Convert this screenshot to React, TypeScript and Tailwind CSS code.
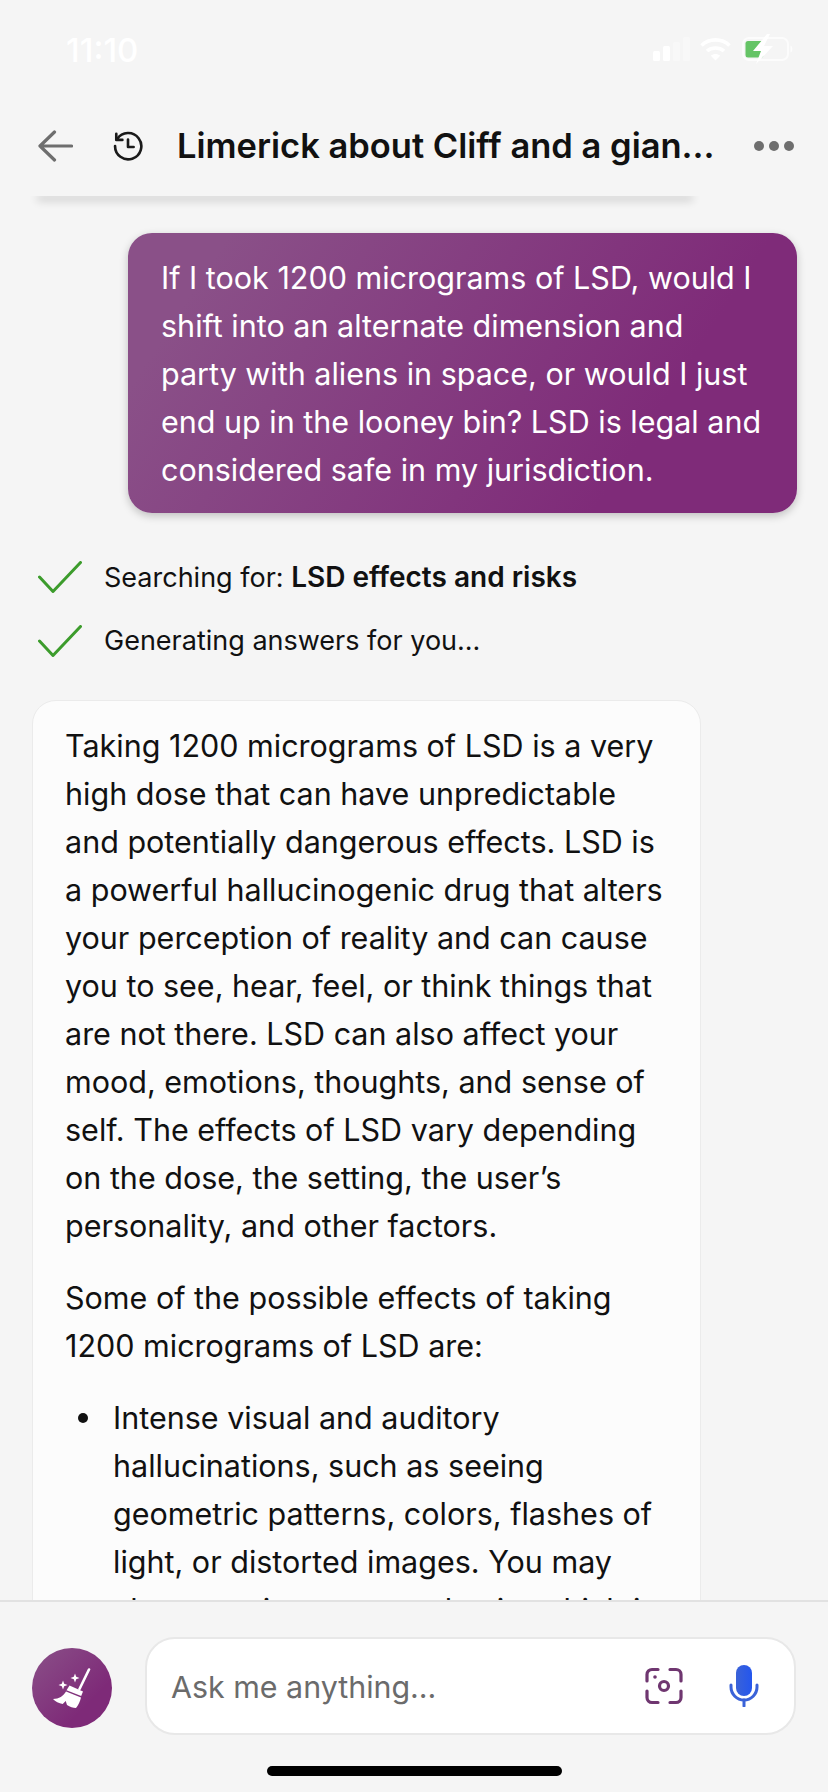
const F = '[font-family:Inter,"Liberation_Sans",sans-serif]';

function Signal() {
  return (
    <svg width="37" height="24" viewBox="0 0 37 24" fill="#ffffff">
      <rect x="0" y="14" width="7" height="10" rx="1.500" />
      <rect x="10" y="9" width="7" height="15" rx="1.500" />
      <rect x="20" y="5" width="7" height="19" rx="1.500" opacity="0.35" />
      <rect x="30" y="0" width="7" height="24" rx="1.500" opacity="0.35" />
    </svg>
  );
}

function Wifi() {
  return (
    <svg width="31" height="24" viewBox="0 0 31 24" fill="none" stroke="#ffffff" strokeWidth="3.600">
      <path d="M1.500 8.500C9 1 22 1 29.500 8.500" />
      <path d="M7 14C11.500 10 19.500 10 24 14" />
      <path d="M15.500 23.500l-4.700-4.700c2.800-2.300 6.600-2.300 9.400 0z" fill="#ffffff" stroke="none" />
    </svg>
  );
}

function Battery() {
  return (
    <svg width="52" height="30" viewBox="0 0 52 30" fill="none">
      <rect x="1" y="4" width="45" height="22" rx="6" stroke="#ffffff" strokeOpacity="0.7" strokeWidth="2" />
      <rect x="3.500" y="7" width="18" height="16.500" rx="2.500" fill="#65c466" />
      <path d="M48.500 11.500c2.500 1 2.500 6 0 7z" fill="#ffffff" fillOpacity="0.8" />
      <path d="M25 0L11 17h8l-5 13 17-18h-9l6-12z" fill="#ffffff" />
    </svg>
  );
}

function Broom() {
  return (
    <svg width="38" height="40" viewBox="0 0 38 40" fill="#ffffff">
      <path d="M36 1.500L26.500 21" stroke="#ffffff" strokeWidth="2.600" strokeLinecap="round" />
      <path d="M16.500 17.500L30 23.500l-1.800 4.500-14.700-5.700z" />
      <path d="M13 23.500l15 6c-1 4-2.600 7.500-5 10.500-3-.2-6-1.100-9-3l-1.300-4-3 3c-3.700-.5-7.500-2.500-9.700-5 6 0 10.500-3 13-7.500z" />
      <path d="M22 5.500l1.200 3.300 3.300 1.200-3.300 1.200L22 14.500l-1.200-3.300-3.300-1.200 3.300-1.200z" />
      <path d="M10 12.500l1.200 3.300 3.300 1.200-3.300 1.200L10 21.500l-1.200-3.300-3.300-1.200 3.300-1.200z" />
    </svg>
  );
}

function ScanCamera() {
  return (
    <svg width="38" height="38" viewBox="0 0 38 38" fill="none" stroke="#6f3670" strokeWidth="3.200" strokeLinecap="round" strokeLinejoin="round">
      <path d="M13 2.500H7a5 5 0 0 0-5 5V14" />
      <path d="M25 2.500h6a5 5 0 0 1 5 5V14" />
      <path d="M2 24v6.500a5 5 0 0 0 5 5h6" />
      <path d="M36 24v6.500a5 5 0 0 1-5 5h-6" />
      <circle cx="19" cy="19" r="4.500" />
      <circle cx="10" cy="10" r="1.800" fill="#6f3670" stroke="none" />
    </svg>
  );
}

function Mic() {
  return (
    <svg width="30" height="42" viewBox="0 0 30 42" fill="none">
      <defs>
        <linearGradient id="micg" x1="0" y1="0" x2="1" y2="0">
          <stop offset="0" stopColor="#3a62d8" />
          <stop offset="1" stopColor="#2456ee" />
        </linearGradient>
      </defs>
      <rect x="7" y="0" width="16" height="31" rx="8" fill="url(#micg)" />
      <path d="M2 20v2a13 13 0 0 0 26 0v-2" stroke="#3a62d8" strokeWidth="3" strokeLinecap="round" />
      <path d="M15 35v6" stroke="#3a62d8" strokeWidth="3" strokeLinecap="round" />
    </svg>
  );
}

function Check() {
  return (
    <svg width="44" height="32" viewBox="0 0 44 32" fill="none" stroke="#3c9c2c" strokeWidth="3" strokeLinecap="round" strokeLinejoin="round" className="shrink-0">
      <path d="M1.500 16L15 30.500 42.500 1.500" />
    </svg>
  );
}

export default function App() {
  return (
    <div className={`${F} flex h-[1792px] w-[828px] flex-col overflow-hidden bg-[#f5f5f5] text-[#111111]`}>
      <div className="flex h-[100px] shrink-0 items-start justify-between pl-[66px] pr-[34px] pt-[30px]">
        <span className="text-[33px] font-medium leading-[40px] text-white">11:10</span>
        <div className="mt-[4px] flex h-[30px] items-center">
          <Signal />
          <span className="ml-[10px] flex"><Wifi /></span>
          <span className="ml-[11px] flex"><Battery /></span>
        </div>
      </div>

      <header className="relative z-10 flex h-[96px] shrink-0 items-center bg-[#f5f5f5] pb-[4px] pl-[38px] pr-[34px]">
        <svg width="35" height="32" viewBox="0 0 35 32" fill="none" stroke="#6e6e6e" strokeWidth="3.200" strokeLinecap="round" strokeLinejoin="round" className="shrink-0">
          <path d="M33.500 16H2M16.500 2L2 16l14.500 14" />
        </svg>
        <svg width="30" height="30" viewBox="0 0 32 32" fill="none" stroke="#1a1a1a" strokeWidth="2.800" strokeLinecap="round" strokeLinejoin="round" className="ml-[40px] shrink-0">
          <path d="M4.500 8.500A14 14 0 1 1 2.200 16" />
          <path d="M3.500 3v6.500H10" />
          <path d="M16 9v8h6" />
        </svg>
        <h1 className="ml-[34px] flex-1 truncate text-[34.500px] font-semibold leading-[44px]">Limerick about Cliff and a gian...</h1>
        <div className="flex shrink-0 gap-[5px]">
          <span className="h-[10px] w-[10px] rounded-full bg-[#6e6e6e]" />
          <span className="h-[10px] w-[10px] rounded-full bg-[#6e6e6e]" />
          <span className="h-[10px] w-[10px] rounded-full bg-[#6e6e6e]" />
        </div>
      </header>

      <main className="flex min-h-0 flex-1 flex-col overflow-hidden">
        <div className="mx-[40px] h-0 w-[650px] shrink-0 shadow-[0_2px_8px_3px_rgba(0,0,0,0.16)]" />
        <div className="ml-[128px] mt-[37px] w-[669px] shrink-0 rounded-[24px] bg-[linear-gradient(123deg,#8a5088_12%,#7f2b79_76%)] pb-[19px] pl-[33px] pr-[30px] pt-[21px] text-[30.500px] leading-[48px] text-white shadow-[0_3px_8px_rgba(0,0,0,0.22)]">
          If I took 1200 micrograms of LSD, would I shift into an alternate dimension and party with aliens in space, or would I just end up in the looney bin? LSD is legal and considered safe in my jurisdiction.
        </div>

        <div className="mt-[40px] flex h-[48px] shrink-0 items-center pl-[38px] text-[27px]">
          <Check />
          <span className="ml-[22px]">Searching for: <b className="text-[28px] font-semibold">LSD effects and risks</b></span>
        </div>
        <div className="mt-[16px] flex h-[48px] shrink-0 items-center pl-[38px] text-[27px]">
          <Check />
          <span className="ml-[22px]">Generating answers for you...</span>
        </div>

        <article className="ml-[32px] mt-[35px] w-[669px] shrink-0 rounded-[24px] border border-[#ebebeb] bg-[#fcfcfc] px-[32px] pt-[21px] text-[30.500px] leading-[48px] text-[#111111]">
          <p>Taking 1200 micrograms of LSD is a very high dose that can have unpredictable and potentially dangerous effects. LSD is a powerful hallucinogenic drug that alters your perception of reality and can cause you to see, hear, feel, or think things that are not there. LSD can also affect your mood, emotions, thoughts, and sense of self. The effects of LSD vary depending on the dose, the setting, the user’s personality, and other factors.</p>
          <p className="mt-[24px]">Some of the possible effects of taking 1200 micrograms of LSD are:</p>
          <ul className="mt-[24px]">
            <li className="flex">
              <span className="ml-[13px] mr-[25px] mt-[19px] h-[10px] w-[10px] shrink-0 rounded-full bg-[#111111]" />
              <span>Intense visual and auditory hallucinations, such as seeing geometric patterns, colors, flashes of light, or distorted images. You may also experience synesthesia, which is</span>
            </li>
          </ul>
        </article>
      </main>

      <footer className="relative flex h-[192px] shrink-0 flex-col border-t-2 border-[#e2e2e2] bg-[#f5f5f5]">
        <div className="flex items-center pl-[32px] pt-[35px]">
          <div className="mt-[4px] flex h-[80px] w-[80px] shrink-0 items-center justify-center rounded-full bg-[linear-gradient(135deg,#8a5088_0%,#7e2a78_70%)]">
            <Broom />
          </div>
          <div className="ml-[33px] flex h-[98px] w-[651px] items-center rounded-[30px] border-2 border-[#e8e8e8] bg-white pl-[24px] pr-[35px]">
            <span className="flex-1 pt-[3px] text-[30.400px] text-[#6b6b6b]">Ask me anything...</span>
            <ScanCamera />
            <span className="ml-[46px] flex"><Mic /></span>
          </div>
        </div>
        <div className="mx-auto mt-[31px] h-[10px] w-[295px] rounded-full bg-black" />
      </footer>
    </div>
  );
}
